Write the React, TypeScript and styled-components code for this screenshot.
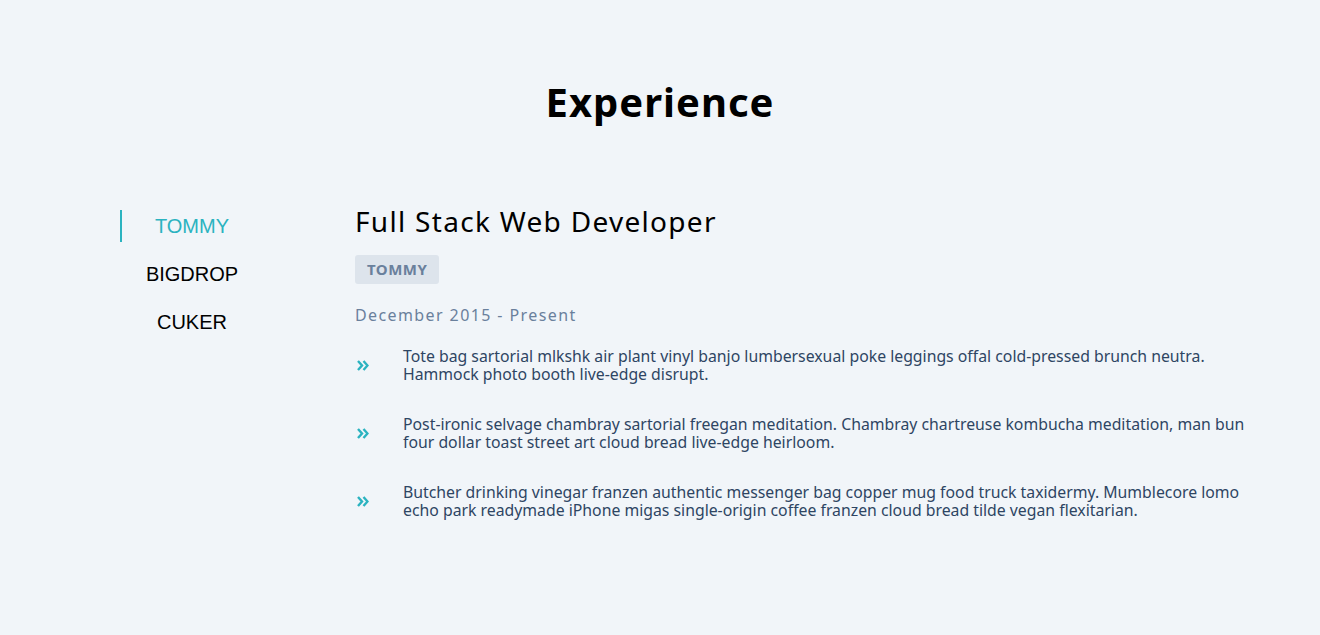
import React, { useState } from "react";
import styled, { createGlobalStyle } from "styled-components";

const Global = createGlobalStyle`
  html, body { margin: 0; padding: 0; background: #f1f5f9; }
  body { font-family: "Noto Sans", "Open Sans", sans-serif; }
`;

const Section = styled.section`
  min-height: 635px;
  box-sizing: border-box;
  padding-top: 76px;
`;

const Heading = styled.h2`
  margin: 0 0 82px 0;
  text-align: center;
  font-size: 40px;
  line-height: 52px;
  font-weight: 700;
  letter-spacing: 1px;
  color: #000;
`;

const Body = styled.div`
  display: flex;
  align-items: flex-start;
  padding: 0 55px 0 120px;
`;

const Nav = styled.ul`
  list-style: none;
  margin: 0;
  padding: 0;
  width: 142px;
  flex-shrink: 0;
  margin-right: 93px;
`;

const NavItem = styled.li<{ $active: boolean }>`
  height: 32px;
  margin-bottom: 16px;
  display: flex;
  align-items: center;
  justify-content: center;
  font-family: "Liberation Sans", Arial, sans-serif;
  font-size: 20px;
  cursor: pointer;
  color: ${(p) => (p.$active ? "#2bb3c0" : "#000")};
  border-left: 2px solid ${(p) => (p.$active ? "#2bb3c0" : "transparent")};
`;

const Content = styled.div`
  flex: 1;
`;

const Title = styled.h3`
  margin: 0;
  font-size: 28px;
  line-height: 22px;
  font-weight: 400;
  letter-spacing: 1.3px;
  color: #000;
`;

const Tag = styled.span`
  display: inline-block;
  margin-top: 23px;
  padding: 0 12px;
  height: 29px;
  line-height: 29px;
  border-radius: 3px;
  background: #dde4ec;
  color: #6a809c;
  font-size: 15px;
  font-weight: 700;
  letter-spacing: 0.5px;
`;

const Dates = styled.div`
  margin-top: 19px;
  font-size: 16px;
  line-height: 24px;
  letter-spacing: 1.4px;
  color: #6a809c;
`;

const List = styled.ul`
  list-style: none;
  margin: 20px 0 0 0;
  padding: 0;
  display: flex;
  flex-direction: column;
  gap: 32px;
`;

const Item = styled.li`
  display: flex;
  align-items: center;
`;

const Chevron = styled.span`
  width: 46px;
  flex-shrink: 0;
  display: flex;
  align-items: center;
  padding-left: 2px;
  color: #2bb3c0;
`;

const Text = styled.p`
  margin: 0;
  font-size: 15.8px;
  line-height: 18px;
  color: #2e4563;
`;

const DoubleAngle = () => (
  <svg width="12" height="11" viewBox="0 0 12 11">
    <path d="M1 1 L5 5.5 L1 10" fill="none" stroke="currentColor" strokeWidth="2.4" />
    <path d="M6.5 1 L10.5 5.5 L6.5 10" fill="none" stroke="currentColor" strokeWidth="2.4" />
  </svg>
);

const jobs = ["TOMMY", "BIGDROP", "CUKER"];

const duties = [
  "Tote bag sartorial mlkshk air plant vinyl banjo lumbersexual poke leggings offal cold-pressed brunch neutra. Hammock photo booth live-edge disrupt.",
  "Post-ironic selvage chambray sartorial freegan meditation. Chambray chartreuse kombucha meditation, man bun four dollar toast street art cloud bread live-edge heirloom.",
  "Butcher drinking vinegar franzen authentic messenger bag copper mug food truck taxidermy. Mumblecore lomo echo park readymade iPhone migas single-origin coffee franzen cloud bread tilde vegan flexitarian.",
];

export default function App() {
  const [active, setActive] = useState(0);
  return (
    <>
      <Global />
      <Section>
        <Heading>Experience</Heading>
        <Body>
          <Nav>
            {jobs.map((j, i) => (
              <NavItem key={j} $active={i === active} onClick={() => setActive(i)}>
                {j}
              </NavItem>
            ))}
          </Nav>
          <Content>
            <Title>Full Stack Web Developer</Title>
            <Tag>{jobs[active]}</Tag>
            <Dates>December 2015 - Present</Dates>
            <List>
              {duties.map((d) => (
                <Item key={d}>
                  <Chevron>
                    <DoubleAngle />
                  </Chevron>
                  <Text>{d}</Text>
                </Item>
              ))}
            </List>
          </Content>
        </Body>
      </Section>
    </>
  );
}
